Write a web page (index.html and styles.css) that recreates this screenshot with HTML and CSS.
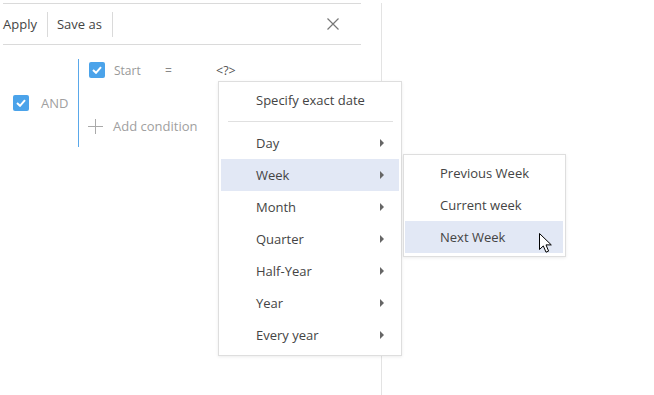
FILE: index.html
```html
<!DOCTYPE html>
<html>
<head>
<meta charset="utf-8">
<link rel="stylesheet" href="styles.css">
</head>
<body>
<div class="panel">
  <div class="toolbar">
    <span class="tb-btn tb-apply">Apply</span>
    <span class="tb-btn tb-save">Save as</span>
    <span class="tb-spacer"></span>
    <span class="tb-close">
      <svg width="12" height="12" viewBox="0 0 12 12"><path d="M0.5 0.5 L11.5 11.5 M11.5 0.5 L0.5 11.5" stroke="#777" stroke-width="1.2" fill="none"/></svg>
    </span>
  </div>
  <div class="filter">
    <div class="group-head">
      <span class="checkbox"><svg width="10" height="8" viewBox="0 0 10 8"><path d="M1 4 L4 6.8 L9 1.2" stroke="#fff" stroke-width="2" fill="none"/></svg></span>
      <span class="and-label">AND</span>
    </div>
    <div class="group-body">
      <div class="cond-row">
        <span class="checkbox"><svg width="10" height="8" viewBox="0 0 10 8"><path d="M1 4 L4 6.8 L9 1.2" stroke="#fff" stroke-width="2" fill="none"/></svg></span>
        <span class="cond-field">Start</span>
        <span class="cond-op">=</span>
        <span class="cond-value">&lt;?&gt;</span>
      </div>
      <div class="add-row">
        <svg class="plus" width="15" height="15" viewBox="0 0 15 15"><path d="M7.5 0 V15 M0 7.5 H15" stroke="#aaa" stroke-width="1" fill="none"/></svg>
        <span class="add-label">Add condition</span>
      </div>
    </div>
  </div>
</div>

<div class="menu main-menu">
  <div class="menu-item">Specify exact date</div>
  <div class="menu-sep"></div>
  <div class="menu-item has-sub">Day<span class="arrow"></span></div>
  <div class="menu-item has-sub active">Week<span class="arrow"></span></div>
  <div class="menu-item has-sub">Month<span class="arrow"></span></div>
  <div class="menu-item has-sub">Quarter<span class="arrow"></span></div>
  <div class="menu-item has-sub">Half-Year<span class="arrow"></span></div>
  <div class="menu-item has-sub">Year<span class="arrow"></span></div>
  <div class="menu-item has-sub">Every year<span class="arrow"></span></div>
</div>

<div class="menu sub-menu">
  <div class="menu-item">Previous Week</div>
  <div class="menu-item">Current week</div>
  <div class="menu-item active">Next Week</div>
</div>

<svg class="cursor" width="14" height="21" viewBox="0 0 14 21">
  <path d="M0.5 0.5 L0.5 16.5 L4.3 12.9 L7 19.2 L9.6 18.1 L7 11.9 L12.3 11.9 Z" fill="#fff" stroke="#000" stroke-width="1" stroke-linejoin="miter"/>
</svg>
</body>
</html>
```
FILE: styles.css
```css
html, body {
  margin: 0;
  padding: 0;
  background: #fff;
  width: 654px;
  height: 395px;
  overflow: hidden;
  font-family: "Open Sans", "Liberation Sans", sans-serif;
  font-size: 13px;
  color: #444;
}

.panel {
  width: 382px;
  height: 395px;
  box-sizing: border-box;
  border-right: 1px solid #e3e3e3;
}

.toolbar {
  margin: 3px 20px 0 3px;
  height: 40px;
  border-top: 1px solid #dadada;
  border-bottom: 1px solid #dadada;
  display: flex;
  align-items: center;
}

.tb-btn {
  display: flex;
  align-items: center;
  height: 25px;
  color: #444;
}

.tb-apply {
  padding-right: 10px;
  border-right: 1px solid #dadada;
}

.tb-save {
  padding: 0 10px 0 9px;
  border-right: 1px solid #dadada;
}

.tb-spacer {
  flex: 1;
}

.tb-close {
  display: flex;
  width: 12px;
  height: 12px;
  margin-right: 22px;
}

.filter {
  display: flex;
  padding-top: 14px;
}

.group-head {
  width: 65px;
  padding-left: 13px;
  display: flex;
  align-items: center;
  gap: 12px;
}

.checkbox {
  width: 16px;
  height: 16px;
  border-radius: 2px;
  background: #4ba3ea;
  display: flex;
  align-items: center;
  justify-content: center;
  flex: none;
}

.and-label {
  color: #a0a0a0;
}

.group-body {
  border-left: 1px solid #5aa8ea;
  height: 88px;
  padding-left: 10px;
  display: flex;
  flex-direction: column;
}

.cond-row {
  display: flex;
  align-items: center;
  height: 16px;
  margin-top: 3px;
}

.cond-field {
  margin-left: 9px;
  width: 51px;
  color: #999;
  font-size: 12px;
}

.cond-op {
  width: 51px;
  color: #888;
  font-size: 12px;
}

.cond-value {
  color: #555;
  font-size: 12.5px;
}

.add-row {
  display: flex;
  align-items: center;
  margin-top: 40px;
  height: 16px;
}

.plus {
  margin-left: -1px;
}

.add-label {
  margin-left: 10px;
  color: #a0a0a0;
}

.menu {
  position: absolute;
  background: #fff;
  border: 1px solid #dedede;
  box-shadow: 0 1px 3px rgba(0, 0, 0, 0.08);
}

.main-menu {
  left: 218px;
  top: 81px;
  width: 178px;
  padding: 2px 2px 4px 2px;
}

.sub-menu {
  left: 403px;
  top: 154px;
  width: 158px;
  padding: 2px 2px 3px 1px;
}

.menu-item {
  position: relative;
  height: 32px;
  line-height: 32px;
  padding-left: 35px;
  color: #444;
  white-space: nowrap;
}

.menu-item.active {
  background: #e2e8f5;
}

.menu-sep {
  height: 1px;
  background: #e0e0e0;
  margin: 5px 6px 5px 7px;
}

.arrow {
  position: absolute;
  right: 15px;
  top: 12px;
  width: 0;
  height: 0;
  border-top: 4px solid transparent;
  border-bottom: 4px solid transparent;
  border-left: 4px solid #666;
}

.cursor {
  position: absolute;
  left: 539px;
  top: 233px;
}
```
